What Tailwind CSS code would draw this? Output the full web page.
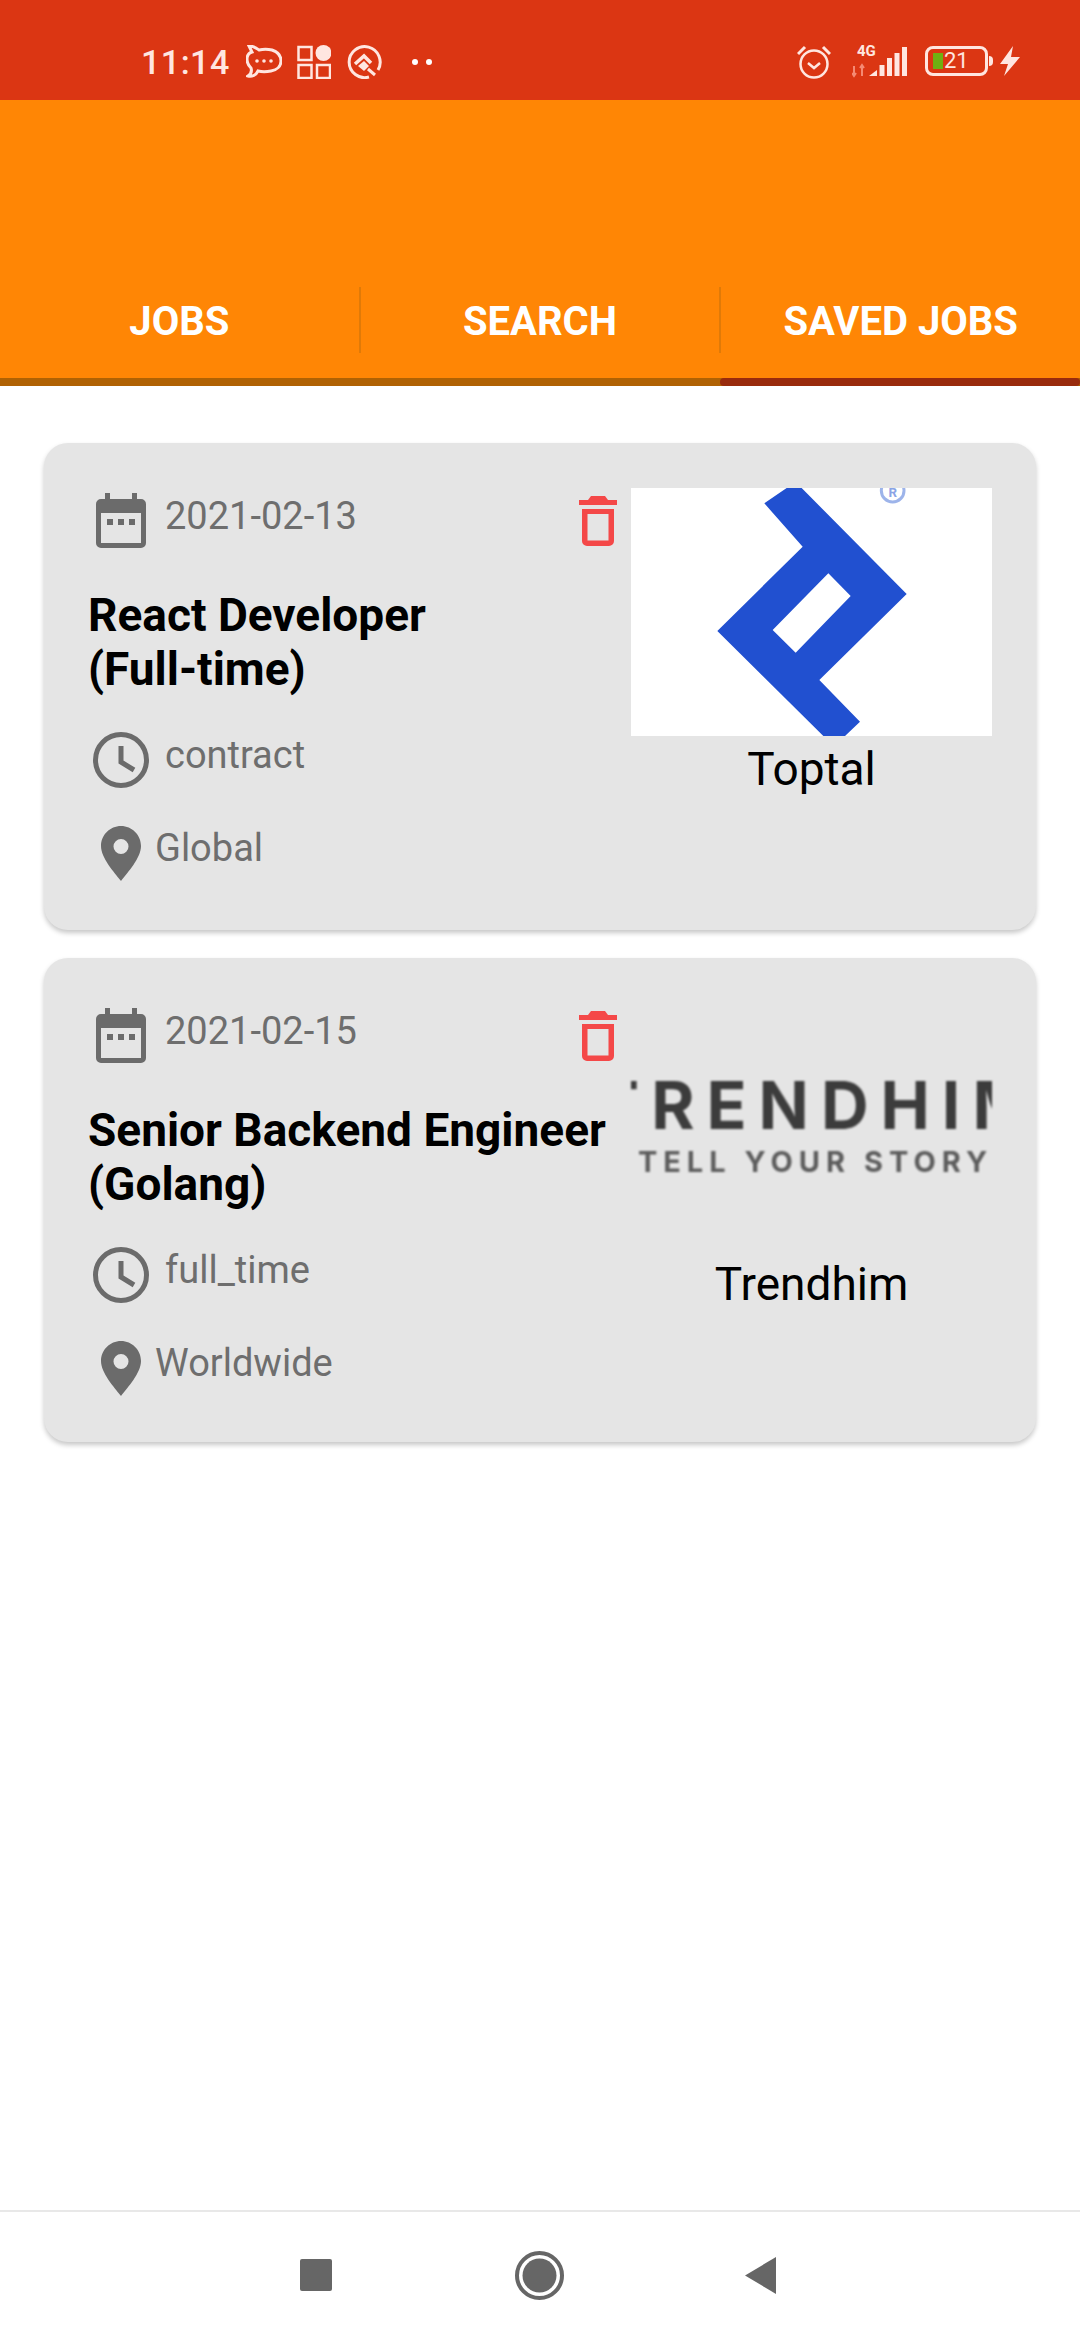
<!DOCTYPE html>
<html>
<head>
<meta charset="utf-8">
<script src="https://cdn.jsdelivr.net/npm/@tailwindcss/browser@4"></script>
</head>
<body class="m-0 bg-white">
<div class="w-[1080px] h-[2340px] flex flex-col bg-white font-['Roboto',sans-serif] overflow-hidden">
  <!-- status bar -->
  <div class="h-[100px] shrink-0 bg-[#db3613] flex items-start text-[#ffe6e0]">
    <div class="flex items-center h-[34px] mt-[45px] ml-[141px]">
      <span class="text-[34px] leading-[34px] font-medium tracking-[0.5px] w-[105px]">11:14</span>
      <svg class="w-[36px] h-[34px]" viewBox="0 0 36 34" fill="none" stroke="#ffe6e0" stroke-width="3"><path d="M3 1 C8 1 10 3 13 5 C17 4 22 4 26 5 C32 7 35 11 35 16 C35 21 31 25 25 26 C20 27 16 27 12 26 C10 30 6 32 2 31 C5 29 6 26 5 23 C2 20 1 17 1 14 C1 11 3 8 6 7 C5 5 4 3 3 1 Z"/><circle cx="11" cy="16" r="1.8" fill="#ffe6e0" stroke="none"/><circle cx="18" cy="16" r="1.8" fill="#ffe6e0" stroke="none"/><circle cx="25" cy="16" r="1.8" fill="#ffe6e0" stroke="none"/></svg>
      <svg class="w-[34px] h-[34px] ml-[15px]" viewBox="0 0 34 34" fill="none" stroke="#ffe6e0" stroke-width="2.5"><rect x="1.5" y="2" width="13" height="13"/><rect x="1.5" y="20" width="13" height="13"/><rect x="20" y="20" width="13" height="13"/><circle cx="26.5" cy="8" r="8" fill="#ffe6e0" stroke="none"/></svg>
      <svg class="w-[35px] h-[34px] ml-[16px]" viewBox="0 0 35 34" fill="none" stroke="#ffe6e0" stroke-width="3"><path d="M31 25 A15.500 15.500 0 1 0 22 32"/><path d="M8 19 L17 11 L24 18" stroke-width="3.500"/><path d="M11 21 L17 16 L22 21 L17 26 Z" fill="#ffe6e0" stroke="none"/><path d="M21 24 L28 30" stroke-width="3"/></svg>
      <div class="flex gap-[8px] ml-[30px]"><span class="w-[6px] h-[6px] rounded-full bg-white"></span><span class="w-[6px] h-[6px] rounded-full bg-white"></span></div>
    </div>
    <div class="flex items-center h-[34px] mt-[45px] ml-auto mr-[60px]">
      <svg class="w-[34px] h-[34px]" viewBox="0 0 34 34" fill="none" stroke="#ffe6e0" stroke-width="2.5"><circle cx="17" cy="19" r="13.5"/><path d="M11 18 L17 23 L23 18"/><path d="M1 9 L8 2 M33 9 L26 2" stroke-width="3"/></svg>
      <div class="relative w-[58px] h-[34px] ml-[21px]">
        <span class="absolute left-[5px] top-[-1px] text-[15px] leading-[15px] font-bold">4G</span>
        <svg class="absolute left-0 top-0" width="58" height="34" viewBox="0 0 58 34"><path d="M2 21 V31 M0 28 L2 31 L4 28" stroke="#f58a73" stroke-width="2" fill="none"/><path d="M10 31 V20 M8 23 L10 20 L12 23" stroke="#f58a73" stroke-width="2" fill="none"/><path d="M17 31 L25 25 V31 Z" fill="#ffe6e0"/><rect x="27.500" y="20" width="5" height="11" fill="#ffe6e0"/><rect x="35" y="13" width="5" height="18" fill="#ffe6e0"/><rect x="42.500" y="8" width="5" height="23" fill="#ffe6e0"/><rect x="50" y="2" width="5" height="29" fill="#ffe6e0"/></svg>
      </div>
      <div class="relative w-[68px] h-[30px] ml-[15px] mt-[-2px]">
        <div class="w-[63px] h-[30px] rounded-[8px] border-[3px] border-[#ffe6e0] flex items-center pl-[5px]">
          <span class="w-[10px] h-[16px] bg-[#6faf12]"></span><span class="text-[22px] leading-[22px] ml-[1px] text-[#ffe6e0]">21</span>
        </div>
        <span class="absolute right-0 top-[10px] w-[4px] h-[10px] bg-[#ffe6e0] rounded-r-sm"></span>
      </div>
      <svg class="w-[20px] h-[30px] ml-[7px] mt-[-2px]" viewBox="0 0 20 30"><path d="M13 0 L0 18 L8 18 L4 30 L20 11 L11 11 Z" fill="#ffe6e0"/></svg>
    </div>
  </div>

  <!-- tabs -->
  <div class="h-[286px] shrink-0 bg-[#ff8605] flex flex-col">
    <div class="flex flex-1 items-end">
      <div class="flex w-full h-[66px] mb-[25px]">
        <div class="flex-1 flex items-center justify-center text-white font-bold text-[40px] leading-[66px] pt-[4px]">JOBS</div>
        <div class="w-[2px] bg-[#e07a08]"></div>
        <div class="flex-1 flex items-center justify-center text-white font-bold text-[40px] leading-[66px] pt-[4px]">SEARCH</div>
        <div class="w-[2px] bg-[#e07a08]"></div>
        <div class="flex-1 flex items-center justify-center text-white font-bold text-[40px] leading-[66px] pt-[4px]">SAVED JOBS</div>
      </div>
    </div>
    <div class="flex h-[8px] bg-[#b06204]">
      <div class="w-[720px]"></div>
      <div class="flex-1 bg-[#992b0d] rounded-[4px]"></div>
    </div>
  </div>

  <!-- cards -->
  <div class="flex-1 flex flex-col px-[44px] pt-[57px] gap-[28px]">
    <div class="h-[487px] rounded-[24px] bg-[#e5e5e5] shadow-[0_3px_5px_rgba(0,0,0,0.22)] flex pl-[44px]">
      <div class="w-[543px] flex flex-col">
        <div class="flex items-start mt-[50px] h-[55px]">
          <svg class="w-[50px] h-[55px] ml-[8px]" viewBox="0 0 50 55"><path d="M9 0 H14 V6 H36 V0 H41 V6 H45 A5 5 0 0 1 50 11 V50 A5 5 0 0 1 45 55 H5 A5 5 0 0 1 0 50 V11 A5 5 0 0 1 5 6 H9 Z M5 20 V50 H45 V20 Z" fill="#6b6b6b" fill-rule="evenodd"/><rect x="11" y="26" width="6" height="6" fill="#6b6b6b"/><rect x="22" y="26" width="6" height="6" fill="#6b6b6b"/><rect x="33" y="26" width="6" height="6" fill="#6b6b6b"/></svg>
          <span class="ml-[19px] mt-[1px] text-[38px] leading-[44px] text-[#6e6e6e]">2021-02-13</span>
          <svg class="w-[38px] h-[50px] ml-auto mr-[14px] mt-[3px]" viewBox="0 0 38 50"><path d="M12 0 H26 L29 4 H38 V9 H0 V4 H9 Z" fill="#f44848"/><path d="M3 13 H35 V45 A5 5 0 0 1 30 50 H8 A5 5 0 0 1 3 45 Z M8.500 18 V44.500 H29.500 V18 Z" fill="#f44848" fill-rule="evenodd"/></svg>
        </div>
        <div class="mt-[40px] text-[46px] leading-[54px] font-bold text-black whitespace-nowrap">React Developer<br>(Full-time)</div>
        <div class="flex items-center mt-[36px] h-[56px]">
          <svg class="w-[56px] h-[56px] ml-[5px]" viewBox="0 0 56 56" fill="none" stroke="#6b6b6b"><circle cx="28" cy="28" r="25.500" stroke-width="5"/><path d="M28 14 V30 L41 38" stroke-width="5"/></svg>
          <span class="ml-[16px] mb-[10px] text-[38px] leading-[44px] text-[#6e6e6e]">contract</span>
        </div>
        <div class="flex items-center mt-[38px] h-[55px]">
          <svg class="w-[40px] h-[55px] ml-[13px]" viewBox="0 0 40 55"><path d="M20 0 C31 0 40 9 40 20 C40 32 27 46 20 55 C13 46 0 32 0 20 C0 9 9 0 20 0 Z M20 13 A7.500 7.500 0 1 0 20 28 A7.500 7.500 0 1 0 20 13 Z" fill="#6b6b6b" fill-rule="evenodd"/></svg>
          <span class="ml-[14px] mb-[12px] text-[38px] leading-[44px] text-[#6e6e6e]">Global</span>
        </div>
      </div>
      <div class="w-[361px] flex flex-col items-center">
        <div class="w-[361px] h-[248px] mt-[45px] bg-white">
          <svg class="w-[361px] h-[248px]" viewBox="33 54 1083 744"><path d="M433 100 L500 54 L545 54 L860 372 L598 630 L720 755 L675 798 L610 798 L292 483 L548 230 Z M625 310 L458 480 L527 548 L692 378 Z" fill="#2150d0" fill-rule="evenodd"/><circle cx="818" cy="62" r="34" fill="none" stroke="#9db4ea" stroke-width="9"/><text x="818" y="82" text-anchor="middle" font-size="40" font-weight="700" fill="#8aa4e6" font-family="Roboto">R</text></svg>
        </div>
        <div class="mt-[8px] text-[46px] leading-[50px] text-black">Toptal</div>
      </div>
    </div>

    <div class="h-[484px] rounded-[24px] bg-[#e5e5e5] shadow-[0_3px_5px_rgba(0,0,0,0.22)] flex pl-[44px]">
      <div class="w-[543px] flex flex-col">
        <div class="flex items-start mt-[50px] h-[55px]">
          <svg class="w-[50px] h-[55px] ml-[8px]" viewBox="0 0 50 55"><path d="M9 0 H14 V6 H36 V0 H41 V6 H45 A5 5 0 0 1 50 11 V50 A5 5 0 0 1 45 55 H5 A5 5 0 0 1 0 50 V11 A5 5 0 0 1 5 6 H9 Z M5 20 V50 H45 V20 Z" fill="#6b6b6b" fill-rule="evenodd"/><rect x="11" y="26" width="6" height="6" fill="#6b6b6b"/><rect x="22" y="26" width="6" height="6" fill="#6b6b6b"/><rect x="33" y="26" width="6" height="6" fill="#6b6b6b"/></svg>
          <span class="ml-[19px] mt-[1px] text-[38px] leading-[44px] text-[#6e6e6e]">2021-02-15</span>
          <svg class="w-[38px] h-[50px] ml-auto mr-[14px] mt-[3px]" viewBox="0 0 38 50"><path d="M12 0 H26 L29 4 H38 V9 H0 V4 H9 Z" fill="#f44848"/><path d="M3 13 H35 V45 A5 5 0 0 1 30 50 H8 A5 5 0 0 1 3 45 Z M8.500 18 V44.500 H29.500 V18 Z" fill="#f44848" fill-rule="evenodd"/></svg>
        </div>
        <div class="mt-[40px] text-[46px] leading-[54px] font-bold text-black whitespace-nowrap">Senior Backend Engineer<br>(Golang)</div>
        <div class="flex items-center mt-[36px] h-[56px]">
          <svg class="w-[56px] h-[56px] ml-[5px]" viewBox="0 0 56 56" fill="none" stroke="#6b6b6b"><circle cx="28" cy="28" r="25.500" stroke-width="5"/><path d="M28 14 V30 L41 38" stroke-width="5"/></svg>
          <span class="ml-[16px] mb-[10px] text-[38px] leading-[44px] text-[#6e6e6e]">full_time</span>
        </div>
        <div class="flex items-center mt-[38px] h-[55px]">
          <svg class="w-[40px] h-[55px] ml-[13px]" viewBox="0 0 40 55"><path d="M20 0 C31 0 40 9 40 20 C40 32 27 46 20 55 C13 46 0 32 0 20 C0 9 9 0 20 0 Z M20 13 A7.500 7.500 0 1 0 20 28 A7.500 7.500 0 1 0 20 13 Z" fill="#6b6b6b" fill-rule="evenodd"/></svg>
          <span class="ml-[14px] mb-[12px] text-[38px] leading-[44px] text-[#6e6e6e]">Worldwide</span>
        </div>
      </div>
      <div class="w-[361px] flex flex-col items-center">
        <div class="w-[361px] h-[248px] mt-[45px] overflow-hidden flex flex-col items-center pt-[69px] font-['Inter',sans-serif] text-[#3c3c3c] blur-[1px]">
          <div class="text-[66px] leading-[66px] font-bold tracking-[12px] whitespace-nowrap pl-[18px]">TRENDHIM</div>
          <div class="mt-[7px] text-[29px] leading-[34px] font-bold tracking-[6px] whitespace-nowrap text-[#5c5c5c] pl-[8px]">TELL YOUR STORY</div>
        </div>
        <div class="mt-[8px] text-[46px] leading-[50px] text-black">Trendhim</div>
      </div>
    </div>
  </div>

  <!-- nav bar -->
  <div class="h-[130px] shrink-0 border-t-2 border-[#e8e8e8] bg-white relative">
    <div class="flex items-center h-full">
      <div class="w-[32px] h-[32px] ml-[300px] mt-[-2px] rounded-[2px] bg-[#666666]"></div>
      <svg class="w-[49px] h-[49px] ml-[183px] mt-[-2px]" viewBox="0 0 49 49"><circle cx="24.500" cy="24.500" r="22.500" fill="none" stroke="#666666" stroke-width="4"/><circle cx="24.500" cy="24.500" r="17" fill="#666666"/></svg>
      <svg class="w-[31px] h-[37px] ml-[181px] mt-[-2px]" viewBox="0 0 31 37"><path d="M31 0 V37 L0 18.500 Z" fill="#666666"/></svg>
    </div>
  </div>
</div>
</body>
</html>
